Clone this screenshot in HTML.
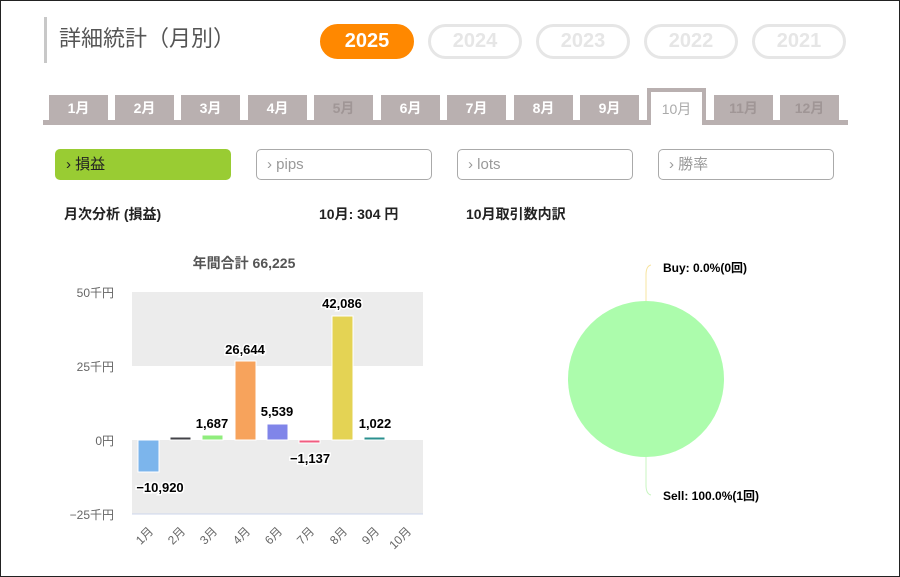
<!DOCTYPE html>
<html><head><meta charset="utf-8"><style>
*{margin:0;padding:0;box-sizing:border-box}
body{width:900px;height:577px;background:#fff;position:relative;overflow:hidden;font-family:"Liberation Sans","Noto Sans CJK JP",sans-serif}
.frame{position:absolute;left:0;top:0;width:900px;height:577px;border:1px solid #222;pointer-events:none}
.a{position:absolute}
.title{left:44px;top:17px;height:46px;border-left:3px solid #c8c8c8;padding-left:12px;font-size:22px;color:#555;line-height:44px}
.pill{top:24px;width:94px;height:35px;border-radius:18px;border:3px solid #e6e6e6;color:#e6e6e6;font-weight:bold;font-size:20px;text-align:center;line-height:29px}
.pill.on{background:#ff8800;border-color:#ff8800;color:#fff}
.tab{top:95px;width:59px;height:26px;background:#b9b0b0;color:#fff;font-weight:bold;font-size:14px;text-align:center;line-height:26px}
.tab.d{color:#a09696}
.btn{top:149px;width:176px;height:31px;border:1px solid #aaa;border-radius:5px;color:#999;font-size:15px;line-height:29px;padding-left:10px}
.lbl{font-size:14px;font-weight:bold;color:#222}
</style></head><body>
<div class="frame"></div>
<div class="a title">詳細統計（月別）</div>
<div class="a pill on" style="left:320px">2025</div>
<div class="a pill" style="left:428px">2024</div>
<div class="a pill" style="left:536px">2023</div>
<div class="a pill" style="left:644px">2022</div>
<div class="a pill" style="left:752px">2021</div>

<div class="a" style="left:43px;top:120px;width:805px;height:5px;background:#b9b0b0"></div>
<div class="a tab" style="left:49px">1月</div>
<div class="a tab" style="left:115px">2月</div>
<div class="a tab" style="left:181px">3月</div>
<div class="a tab" style="left:248px">4月</div>
<div class="a tab d" style="left:314px">5月</div>
<div class="a tab" style="left:381px">6月</div>
<div class="a tab" style="left:447px">7月</div>
<div class="a tab" style="left:514px">8月</div>
<div class="a tab" style="left:580px">9月</div>
<div class="a tab" style="left:647px;top:88px;height:37px;background:#fff;border:4px solid #b9b0b0;border-bottom:none;color:#aaa;font-weight:normal;line-height:34px">10月</div>
<div class="a tab d" style="left:714px">11月</div>
<div class="a tab d" style="left:780px">12月</div>

<div class="a btn" style="left:55px;background:#99cc33;border-color:#99cc33;color:#222">› 損益</div>
<div class="a btn" style="left:256px">› pips</div>
<div class="a btn" style="left:457px">› lots</div>
<div class="a btn" style="left:658px">› 勝率</div>

<div class="a lbl" style="left:64px;top:204px">月次分析 (損益)</div>
<div class="a lbl" style="left:319px;top:204px">10月:  304 円</div>
<div class="a lbl" style="left:466px;top:204px">10月取引数内訳</div>

<svg class="a" style="left:0;top:0" width="900" height="577" font-family="Liberation Sans, Noto Sans CJK JP, sans-serif">
<text x="244" y="268" font-size="14" font-weight="bold" fill="#555" text-anchor="middle">年間合計 66,225</text>
<rect x="132" y="292" width="291" height="74" fill="#ececec"/>
<rect x="132" y="440" width="291" height="74" fill="#ececec"/>
<line x1="132" y1="514" x2="423" y2="514" stroke="#ccd6eb"/>
<g font-size="12" fill="#666" text-anchor="end">
<text x="114" y="297">50千円</text><text x="114" y="371">25千円</text><text x="114" y="445">0円</text><text x="114" y="519">−25千円</text>
</g>
<g stroke="#fff" stroke-width="1">
<rect x="138" y="440" width="21" height="32" fill="#7cb5ec"/>
<rect x="170" y="437" width="21" height="3" fill="#434348"/>
<rect x="202" y="435" width="21" height="5" fill="#90ed7d"/>
<rect x="235" y="361" width="21" height="79" fill="#f7a35c"/>
<rect x="267" y="424" width="21" height="16" fill="#8085e9"/>
<rect x="299" y="440" width="21" height="3" fill="#f15c80"/>
<rect x="332" y="316" width="21" height="124" fill="#e4d354"/>
<rect x="364" y="437" width="21" height="3" fill="#2b908f"/>
</g>
<g font-size="13" font-weight="bold" fill="#000" text-anchor="middle" stroke="#fff" stroke-width="3" paint-order="stroke">
<text x="160" y="492">−10,920</text>
<text x="212" y="428">1,687</text>
<text x="245" y="354">26,644</text>
<text x="277" y="416">5,539</text>
<text x="310" y="463">−1,137</text>
<text x="342" y="308">42,086</text>
<text x="375" y="428">1,022</text>
</g>
<g font-size="12" fill="#666" text-anchor="end">
<text transform="translate(154,532) rotate(-45)">1月</text>
<text transform="translate(186,532) rotate(-45)">2月</text>
<text transform="translate(218,532) rotate(-45)">3月</text>
<text transform="translate(251,532) rotate(-45)">4月</text>
<text transform="translate(283,532) rotate(-45)">6月</text>
<text transform="translate(315,532) rotate(-45)">7月</text>
<text transform="translate(348,532) rotate(-45)">8月</text>
<text transform="translate(380,532) rotate(-45)">9月</text>
<text transform="translate(412,532) rotate(-45)">10月</text>
</g>
<circle cx="646" cy="379" r="78" fill="#acfcac"/>
<path d="M646 301 L646 275 Q646 266 651 265" fill="none" stroke="#f7e4a0"/>
<path d="M646 457 L646 485 Q646 494 651 495" fill="none" stroke="#c8f5c0"/>
<g font-size="12" font-weight="bold" fill="#000">
<text x="663" y="272">Buy: 0.0%(0回)</text>
<text x="663" y="500">Sell: 100.0%(1回)</text>
</g>
</svg>
</body></html>
